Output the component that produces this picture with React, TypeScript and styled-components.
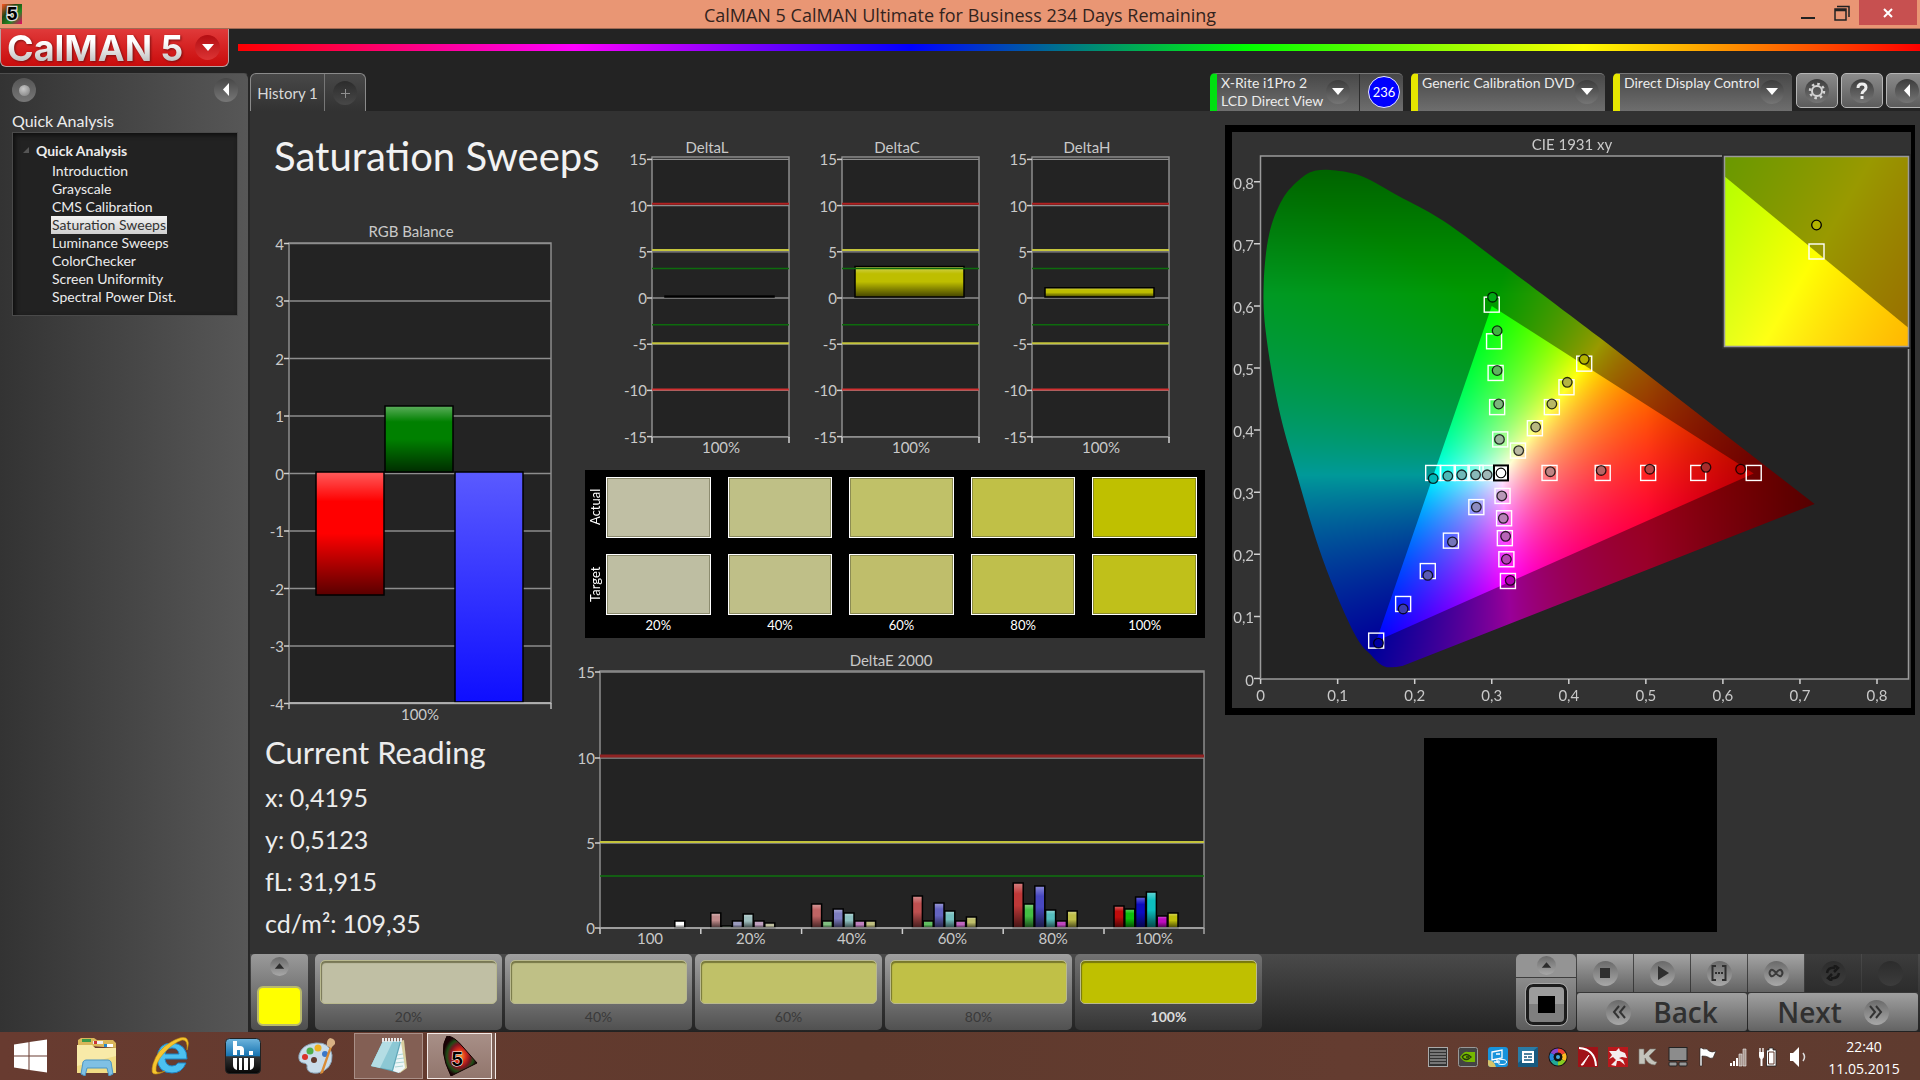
import React, { useEffect, useRef } from 'react';
import styled, { createGlobalStyle } from 'styled-components';

const UI = '"Lato", "Liberation Sans", sans-serif';
const SYSTEM = '"Open Sans", "Noto Sans", sans-serif';

const GlobalStyle = createGlobalStyle`
  *, *::before, *::after { box-sizing: border-box; }
  body { margin: 0; background: #232323; font-family: ${UI}; color: #ececec; }
  button { font: inherit; color: inherit; border: 0; padding: 0; background: none; cursor: pointer; }
  h1, h2, ul, dl, dd, dt, p { margin: 0; padding: 0; font-weight: 400; }
  ul { list-style: none; }
  svg, canvas { display: block; }
`;

/* ---------- window frame ---------- */

const Window = styled.div`
  display: flex;
  flex-direction: column;
  min-height: 100vh;
`;

const TitleBar = styled.header`
  display: grid;
  grid-template-columns: 140px 1fr 140px;
  height: 29px;
  background: #e99674;
  border-bottom: 1px solid #a06a54;
`;

const AppIcon = styled.div`
  padding: 4px 2px;
`;

const WindowTitle = styled.div`
  text-align: center;
  font-family: ${SYSTEM};
  font-size: 18px;
  line-height: 30px;
  color: #33231d;
`;

const WindowButtons = styled.div`
  display: flex;
  justify-content: flex-end;
  padding-right: 3px;
`;

const WindowButton = styled.button<{ $close?: boolean }>`
  display: flex;
  align-items: center;
  justify-content: center;
  width: ${(p) => (p.$close ? 58 : 34)}px;
  height: 25px;
  background: ${(p) => (p.$close ? '#c75050' : 'transparent')};
`;

const BrandRow = styled.div`
  display: flex;
  gap: 9px;
  height: 44px;
  background: #232323;
`;

const LogoButton = styled.button`
  display: flex;
  align-items: center;
  justify-content: space-between;
  width: 229px;
  height: 38px;
  padding: 0 8px 0 6px;
  border: 1px solid #b9a0a0;
  border-top: 0;
  border-radius: 0 0 6px 6px;
  background: linear-gradient(#e03a3a, #d62424 45%, #c90c0c);
`;

const LogoText = styled.span`
  display: flex;
  gap: 8px;
  font-family: "Inter", sans-serif;
  font-weight: 700;
  font-size: 36px;
  line-height: 30px;
  background: linear-gradient(#ffffff 30%, #bdbdbd);
  background-clip: text;
  color: transparent;
  filter: drop-shadow(1px 1px 1px #7a1010);
`;

const Rainbow = styled.div`
  flex: 1;
  height: 7px;
  margin-top: 15px;
  background: linear-gradient(90deg, #f00, #f0f 20%, #00f 40%, #0f0 60%, #ff0 80%, #f00);
`;

const Round = styled.span<{ $size: number; $bg: string }>`
  display: flex;
  align-items: center;
  justify-content: center;
  flex: none;
  width: ${(p) => p.$size}px;
  height: ${(p) => p.$size}px;
  border-radius: 50%;
  background: ${(p) => p.$bg};
`;

const Body = styled.div`
  display: flex;
  flex: 1;
`;

/* ---------- sidebar ---------- */

const Sidebar = styled.aside`
  display: flex;
  flex-direction: column;
  width: 250px;
  flex: none;
  padding: 4px 10px 0 12px;
  border-top: 1px solid #4d4d4d;
  border-right: 2px solid #262626;
  border-radius: 0 6px 0 0;
  background: linear-gradient(90deg, #333, #575757);
`;

const SidebarTools = styled.div`
  display: flex;
  justify-content: space-between;
`;

const SidebarTitle = styled.h2`
  margin: 8px 0 0;
  font-size: 16px;
  line-height: 22px;
`;

const Tree = styled.nav`
  height: 184px;
  padding: 8px 0 0 10px;
  border: 1px solid #4a4a4a;
  background: #222;
  box-shadow: inset 2px 2px 5px #0d0d0d;
  font-size: 14px;
`;

const TreeRoot = styled.div`
  display: flex;
  align-items: center;
  gap: 7px;
  height: 18px;
  font-size: 14px;
  font-weight: 700;
`;

const TreeList = styled.ul`
  display: flex;
  flex-direction: column;
  padding: 3px 0 0 28px;
`;

const TreeLink = styled.a<{ $on?: boolean }>`
  display: inline-block;
  padding: 0 1px;
  line-height: 18px;
  text-decoration: none;
  vertical-align: top;
  color: ${(p) => (p.$on ? '#333' : '#ececec')};
  background: ${(p) => (p.$on ? 'linear-gradient(#f2f2f2, #cfcfcf)' : 'none')};
`;

/* ---------- tabs and devices ---------- */

const Main = styled.main`
  display: flex;
  flex-direction: column;
  flex: 1;
  min-width: 0;
`;

const TopRow = styled.div`
  display: flex;
  justify-content: space-between;
  height: 38px;
  background: #232323;
`;

const Tabs = styled.div`
  display: flex;
  border: 1px solid #8a8a8a;
  border-bottom: 0;
  border-radius: 6px 6px 0 0;
  background: linear-gradient(#484848, #323232);
`;

const Tab = styled.button<{ $w: number }>`
  display: flex;
  align-items: center;
  justify-content: center;
  width: ${(p) => p.$w}px;
  padding-top: 1px;
  font-size: 15px;
  color: #d8d8d8;
  & + & { border-left: 1px solid #777; }
`;

const Devices = styled.div`
  display: flex;
  gap: 8px;
  overflow: hidden;
`;

const Device = styled.div<{ $strip: string; $w: number }>`
  display: flex;
  width: ${(p) => p.$w}px;
  border-top: 1px solid #777;
  border-left: 7px solid ${(p) => p.$strip};
  border-radius: 5px 5px 0 0;
  background: linear-gradient(#484848, #6e6e6e);
`;

const DeviceMenu = styled.button`
  display: flex;
  flex: 1;
  justify-content: space-between;
  padding: 0 9px 0 4px;
  text-align: left;
  font-size: 14px;
  line-height: 18px;
  white-space: nowrap;
  ${Round} { margin-top: 6px; }
`;

const Meter = styled.div`
  display: flex;
  align-items: center;
  justify-content: flex-end;
  width: 44px;
  padding: 0 3px 2px 0;
  border-left: 1px solid #2d2d2d;
`;

const MeterValue = styled.span`
  width: 32px;
  height: 32px;
  border: 1px solid #e8e8ff;
  border-radius: 50%;
  background: #0000fe;
  font-size: 13px;
  line-height: 30px;
  text-align: center;
  color: #fff;
`;

const ToolButtons = styled.div`
  display: flex;
  gap: 3px;
  margin: 0 -8px 0 -4px;
`;

const ToolButton = styled.button`
  display: flex;
  align-items: center;
  justify-content: center;
  width: 42px;
  height: 35px;
  border: 1px solid #b5b5b5;
  border-radius: 5px;
  background: linear-gradient(#8b8b8b, #5c5c5c);
`;

/* ---------- workspace ---------- */

const Workspace = styled.section`
  display: grid;
  grid-template-columns: minmax(0, 290fr) minmax(0, 630fr) minmax(0, 690fr);
  gap: 20px;
  flex: 1;
  padding: 0 5px 0 15px;
  background: #323232;
`;

const Column = styled.div`
  display: flex;
  flex-direction: column;
`;

const PageTitle = styled.h1`
  margin: 18px 0 35px 9px;
  font-size: 40px;
  line-height: 54px;
  white-space: nowrap;
  color: #f2f2f2;
`;

const Chart = styled.svg`
  width: 100%;
  height: auto;
  font-family: ${UI};
  font-size: 15px;
  fill: #c9c9c9;
`;

const Reading = styled.section`
  margin-top: 2px;
`;

const ReadingTitle = styled.h2`
  font-size: 31px;
  line-height: 44px;
`;

const ReadingList = styled.dl`
  margin-top: 2px;
  font-size: 25px;
  line-height: 42px;
  white-space: nowrap;
`;

const ReadingRow = styled.div`
  display: flex;
  gap: 6px;
`;

const DeltaRow = styled.div`
  display: grid;
  grid-template-columns: repeat(3, minmax(0, 1fr));
  gap: 24px;
  margin: 27px 35px 10px 49px;
`;

const SwatchPanel = styled.div`
  display: grid;
  grid-template-columns: 18px 1fr;
  height: 168px;
  margin: 0 0 12px 10px;
  padding: 7px 8px 0 3px;
  background: #000;
`;

const SwatchSides = styled.div`
  display: grid;
  grid-template-rows: 77px 60px;
  align-content: start;
`;

const SwatchSide = styled.span`
  width: 14px;
  height: 60px;
  writing-mode: vertical-rl;
  transform: rotate(180deg);
  text-align: center;
  font-size: 13px;
  line-height: 14px;
  color: #fff;
`;

const SwatchGrid = styled.div`
  display: grid;
  grid-template-columns: repeat(5, minmax(0, 1fr));
  grid-template-rows: 77px 61px 22px;
  column-gap: 17px;
`;

const Swatch = styled.div<{ $c: string }>`
  height: 61px;
  border: 1px solid #fff;
  background: ${(p) => p.$c};
  box-shadow: inset 0 0 0 1px rgba(90, 90, 60, 0.5);
`;

const SwatchLabel = styled.span`
  text-align: center;
  font-size: 13px;
  line-height: 20px;
  color: #fff;
`;

const CieFrame = styled.div`
  display: grid;
  margin-top: 14px;
  border: solid #000;
  border-width: 7px 4px 7px 7px;
`;

const CieCanvas = styled.canvas`
  grid-area: 1 / 1;
  width: 100%;
`;

const CieOverlay = styled(Chart)`
  grid-area: 1 / 1;
`;

const Preview = styled.div`
  align-self: center;
  width: 293px;
  height: 194px;
  margin-top: 23px;
  background: #000;
`;

/* ---------- bottom bar ---------- */

const BottomBar = styled.footer`
  display: flex;
  justify-content: space-between;
  height: 78px;
  padding: 0 2px 1px 1px;
  background: linear-gradient(#4a4a4a, #242424);
  border-bottom: 1px solid #222;
`;

const PatchGroup = styled.div`
  display: flex;
  gap: 3px;
`;

const CurrentPatch = styled.div`
  display: flex;
  flex-direction: column;
  align-items: center;
  justify-content: space-between;
  width: 57px;
  margin-right: 4px;
  padding: 3px 0 4px;
  border-radius: 4px;
  background: linear-gradient(#9a9a9a, #4e4e4e);
`;

const CurrentColour = styled.span`
  width: 45px;
  height: 40px;
  border: 2px solid #b9b96c;
  border-radius: 6px;
  background: #ff0;
`;

const Patch = styled.button<{ $on?: boolean }>`
  display: flex;
  flex-direction: column;
  width: 187px;
  padding: 6px 5px 0;
  border-radius: 5px;
  background: ${(p) => (p.$on ? 'linear-gradient(#727272, #353535)' : 'linear-gradient(#a0a0a0, #515151)')};
  font-size: 14px;
  font-weight: ${(p) => (p.$on ? 700 : 400)};
  color: ${(p) => (p.$on ? '#dcdcdc' : '#3a3a3a')};
`;

const PatchColour = styled.span<{ $c: string }>`
  align-self: stretch;
  height: 47px;
  border: 1px solid #b9b98f;
  border-radius: 5px;
  background: ${(p) => p.$c};
  box-shadow: inset 1px 2px 1px rgba(60, 60, 20, 0.55);
`;

const PatchLabel = styled.span`
  align-self: center;
  line-height: 26px;
`;

const Transport = styled.div`
  display: flex;
  gap: 1px;
`;

const StopPanel = styled.div`
  display: flex;
  flex-direction: column;
  gap: 1px;
  width: 60px;
`;

const StopHead = styled.button`
  display: flex;
  align-items: center;
  justify-content: center;
  height: 23px;
  border-radius: 5px 5px 0 0;
  background: #949494;
`;

const StopBody = styled.button`
  display: flex;
  align-items: center;
  justify-content: center;
  flex: 1;
  border-radius: 0 0 5px 5px;
  background: linear-gradient(#8c8c8c, #5c5c5c);
`;

const StopFrame = styled.span`
  display: flex;
  align-items: center;
  justify-content: center;
  width: 41px;
  height: 41px;
  border: 3px solid #1c1c1c;
  border-radius: 7px;
  outline: 1px solid #a5a5a5;
  background: linear-gradient(#9c9c9c 49%, #7f7f7f 50%);
  &::after { content: ''; width: 17px; height: 17px; background: #000; }
`;

const TransportGrid = styled.div`
  display: grid;
  grid-template-columns: repeat(6, 56px);
  grid-template-rows: 38px 38px;
  gap: 1px;
`;

const TransportButton = styled.button<{ $off?: boolean }>`
  display: flex;
  align-items: center;
  justify-content: center;
  background: ${(p) => (p.$off ? 'linear-gradient(#3c3c3c, #2c2c2c)' : 'linear-gradient(#a4a4a4, #636363)')};
`;

const NavButton = styled.button`
  grid-column: span 3;
  display: flex;
  align-items: center;
  justify-content: center;
  gap: 22px;
  border-radius: 3px;
  background: linear-gradient(#a0a0a0, #636363);
  font-family: ${SYSTEM};
  font-weight: 600;
  font-size: 28px;
  line-height: 36px;
  color: #303030;
`;

/* ---------- taskbar ---------- */

const TaskBar = styled.div`
  display: flex;
  justify-content: space-between;
  height: 48px;
  background: linear-gradient(90deg, #683b30, #5f3a2d 45%, #643c30 70%, #5f3b2f);
`;

const TaskGroup = styled.div`
  display: flex;
  align-items: center;
`;

const TaskButton = styled.button<{ $w: number; $state?: 'open' | 'active' }>`
  display: flex;
  align-items: center;
  justify-content: center;
  width: ${(p) => p.$w}px;
  height: 46px;
  margin-right: ${(p) => (p.$state ? 4 : 0)}px;
  border: ${(p) => (p.$state ? `1px solid ${p.$state === 'active' ? '#f3e9e6' : '#a98f87'}` : '0')};
  background: ${(p) =>
    p.$state === 'active' ? 'linear-gradient(#a88f87, #92766d)' : p.$state === 'open' ? '#835f54' : 'none'};
  box-shadow: ${(p) => (p.$state === 'active' ? '3px 0 0 #7d6056, 4px 0 0 #f3e9e6' : 'none')};
`;

const Tray = styled.div`
  display: flex;
  align-items: center;
  gap: 10px;
  padding-top: 2px;
`;

const Clock = styled.time`
  display: flex;
  flex-direction: column;
  width: 112px;
  padding-top: 3px;
  text-align: center;
  font-family: ${SYSTEM};
  font-size: 14px;
  line-height: 22px;
  color: #fff;
`;

/* ---------- small drawings ---------- */

type Dir = 'down' | 'up' | 'left';
const ARROWS: Record<Dir, string> = { down: 'M1 3h12l-6 7z', up: 'M1 10h12l-6-7z', left: 'M10 0v13L4 6.500z' };
const Arrow = ({ dir, fill = '#fff', size = 14 }: { dir: Dir; fill?: string; size?: number }) => (
  <svg width={size} height={size} viewBox="0 0 14 14" aria-hidden="true">
    <path d={ARROWS[dir]} fill={fill} />
  </svg>
);

const Five = () => (
  <svg width="20" height="20" viewBox="0 0 20 20" aria-hidden="true">
    <defs>
      <linearGradient id="five" x2="1" y2="1">
        <stop offset="0" stopColor="#f52" />
        <stop offset=".35" stopColor="#241" />
        <stop offset=".65" stopColor="#282" />
        <stop offset="1" stopColor="#e06" />
      </linearGradient>
    </defs>
    <rect width="20" height="20" fill="url(#five)" />
    <text x="10" y="16" textAnchor="middle" fontFamily="Inter, sans-serif" fontWeight="800" fontSize="17" fill="#000" stroke="#ddd" strokeWidth="2.500" paintOrder="stroke">5</text>
  </svg>
);

/* ---------- charts ---------- */

const GRID = '#8d8d8d';

const ShineDefs = ({ id }: { id: string }) => (
  <defs>
    <linearGradient id={id} x2="0" y2="1">
      <stop offset="0" stopColor="#fff" stopOpacity=".36" />
      <stop offset=".24" stopColor="#fff" stopOpacity="0" />
      <stop offset=".5" stopColor="#000" stopOpacity="0" />
      <stop offset="1" stopColor="#000" stopOpacity=".65" />
    </linearGradient>
  </defs>
);

interface BarProps { x: number; y: number; w: number; h: number; fill: string; shine?: string }
const Bar = ({ x, y, w, h, fill, shine }: BarProps) => (
  <g>
    <rect x={x} y={y} width={w} height={h} fill={fill} />
    {shine && <rect x={x} y={y} width={w} height={h} fill={`url(#${shine})`} />}
    <rect x={x} y={y} width={w} height={h} fill="none" stroke="#000" strokeWidth="1.5" />
  </g>
);

interface FrameProps { x: number; y: number; w: number; h: number; ticks: [string, number][]; grid?: boolean }
const PlotFrame = ({ x, y, w, h, ticks, grid }: FrameProps) => (
  <g>
    <rect x={x} y={y} width={w} height={h} fill="#232323" stroke={GRID} strokeWidth="1.5" />
    {ticks.map(([label, ty]) => (
      <g key={label}>
        {grid && <line x1={x} x2={x + w} y1={ty} y2={ty} stroke={GRID} strokeWidth="1.3" />}
        <line x1={x - 5} x2={x} y1={ty} y2={ty} stroke="#cfcfcf" strokeWidth="1.5" />
        <text x={x - 5} y={ty + 6} textAnchor="end">{label}</text>
      </g>
    ))}
  </g>
);

const RgbBalance = () => {
  const ticks = [4, 3, 2, 1, 0, -1, -2, -3, -4].map((v) => [String(v), 255.5 - v * 57.5] as [string, number]);
  return (
    <Chart viewBox="0 0 290 510" role="img" aria-label="RGB Balance">
      <ShineDefs id="rgbShine" />
      <defs>
        <linearGradient id="rgbBlue" x2="0" y2="1">
          <stop offset="0" stopColor="#5a5aff" />
          <stop offset="1" stopColor="#0e0eff" />
        </linearGradient>
      </defs>
      <text x="146" y="19" textAnchor="middle">RGB Balance</text>
      <PlotFrame x={24} y={25} w={262} h={460} ticks={ticks} grid />
      <Bar x={51} y={254} w={68} h={123} fill="#f00" shine="rgbShine" />
      <Bar x={120} y={188} w={68} h={66} fill="#008000" shine="rgbShine" />
      <Bar x={190} y={254} w={68} h={230} fill="url(#rgbBlue)" />
      <path d="M24 485h262M24 485v6M286 485v6" stroke="#bbb" strokeWidth="1.5" />
      <text x="155" y="502" textAnchor="middle">100%</text>
    </Chart>
  );
};

const DeltaChart = ({ name, value }: { name: string; value: number }) => {
  const y = (v: number) => 160 - v * 9.24;
  const ticks = [15, 10, 5, 0, -5, -10, -15].map((v) => [String(v), y(v)] as [string, number]);
  const limits: [number, string, number][] = [
    [10.2, '#b02020', 2], [5.2, '#c4c43c', 2], [3.2, '#0d6b0d', 1.5],
    [-2.9, '#0d6b0d', 1.5], [-4.9, '#c4c43c', 2], [-9.9, '#d03030', 2],
  ];
  const id = `shine${name}`;
  return (
    <Chart viewBox="0 0 166 322" role="img" aria-label={name}>
      <ShineDefs id={id} />
      <text x="83" y="15" textAnchor="middle">{name}</text>
      <PlotFrame x={28} y={19} w={137} h={280} ticks={ticks} grid />
      <Bar x={41} y={y(value) - 1} w={109} h={y(0) - y(value)} fill="#bebe00" shine={id} />
      {limits.map(([v, c, w]) => (
        <line key={v} x1="28" x2="165" y1={y(v)} y2={y(v)} stroke={c} strokeWidth={w} />
      ))}
      <path d="M28 299v6M165 299v6" stroke="#cfcfcf" strokeWidth="1.5" />
      <text x="97" y="315" textAnchor="middle">100%</text>
    </Chart>
  );
};

const SERIES: { label: string; bars: [number, string][] }[] = [
  { label: '100', bars: [[0, ''], [0, ''], [0, ''], [0, ''], [0, ''], [0, ''], [7, '#ffffff']] },
  { label: '20%', bars: [[15, '#be8a8a'], [2, '#9fbe9f'], [7, '#9a9abe'], [14, '#9fbebe'], [7, '#be9fbe'], [5, '#bebe9f']] },
  { label: '40%', bars: [[24, '#c06464'], [7, '#7fbe7f'], [19, '#7d7dc0'], [15, '#8ec0c0'], [7, '#be7fbe'], [7, '#bebe7f']] },
  { label: '60%', bars: [[32, '#be5050'], [7, '#5fbe5f'], [25, '#6464c0'], [17, '#74bebe'], [7, '#be64be'], [11, '#bebe6a']] },
  { label: '80%', bars: [[45, '#be3838'], [24, '#44be44'], [42, '#4848c0'], [18, '#54bebe'], [7, '#be44be'], [17, '#bebe48']] },
  { label: '100%', bars: [[22, '#be0c0c'], [19, '#0cbe0c'], [31, '#0c0cc0'], [36, '#0cbebe'], [12, '#be0cbe'], [15, '#bebe0c']] },
];

const DeltaE = () => (
  <Chart viewBox="0 0 630 300" role="img" aria-label="DeltaE 2000">
    <ShineDefs id="deShine" />
    <text x="316" y="16" textAnchor="middle">DeltaE 2000</text>
    <PlotFrame x={25} y={21} w={604} h={257} ticks={[['15', 22], ['10', 108], ['5', 193], ['0', 278]]} grid />
    <line x1="25" x2="629" y1="106" y2="106" stroke="#8f2222" strokeWidth="3" />
    <line x1="25" x2="629" y1="192" y2="192" stroke="#c4c43c" strokeWidth="2" />
    <line x1="25" x2="629" y1="226" y2="226" stroke="#0f730f" strokeWidth="1.5" />
    {SERIES.map(({ label, bars }, g) => {
      const left = 25 + g * 100.8;
      return (
        <g key={label}>
          {bars.map(([h, c], i) => h > 0 && (
            <Bar key={i} x={left + 10 + i * 10.8} y={278 - h} w={10} h={h} fill={c} shine="deShine" />
          ))}
          <line x1={left} x2={left} y1="278" y2="284" stroke="#cfcfcf" strokeWidth="1.5" />
          <text x={left + 50} y="294" textAnchor="middle">{label}</text>
        </g>
      );
    })}
    <path d="M25 278h604M629 278v6" stroke="#a5a5a5" strokeWidth="1.5" />
  </Chart>
);

/* ---------- chromaticity diagram ---------- */

type XY = [number, number];
const CIE_W = 679;
const CIE_H = 576;
const px = (x: number) => 28.6 + 770.5 * x;
const py = (y: number) => 546.5 - 621 * y;

const LOCUS: XY[] = [
  [0.719, 0.281], [0.44, 0.549], [0.318, 0.663], [0.237, 0.737], [0.179, 0.777], [0.133, 0.808], [0.098, 0.818],
  [0.072, 0.818], [0.052, 0.805], [0.028, 0.771], [0.011, 0.715], [0.004, 0.635], [0.007, 0.555], [0.023, 0.438],
  [0.046, 0.333], [0.081, 0.191], [0.121, 0.074], [0.144, 0.037], [0.158, 0.021], [0.17, 0.018], [0.184, 0.02],
];
const GAMUT: XY[] = [[0.64, 0.33], [0.3, 0.6], [0.15, 0.06]];

interface Plane {
  left: number;
  top: number;
  w: number;
  h: number;
  x: (v: number) => number;
  y: (v: number) => number;
  ix: (p: number) => number;
  iy: (p: number) => number;
}
const MAIN_PLANE: Plane = {
  left: 29, top: 24, w: 647, h: 523, x: px, y: py,
  ix: (p) => (p - 28.6) / 770.5, iy: (p) => (546.5 - p) / 621,
};
const INSET_PLANE: Plane = {
  left: 493, top: 25, w: 183, h: 189,
  x: (v) => 584.5 + (v - 0.4193) * 3660, y: (v) => 120 - (v - 0.5053) * 3800,
  ix: (p) => 0.4193 + (p - 584.5) / 3660, iy: (p) => 0.5053 - (p - 120) / 3800,
};

const shade = (x: number, y: number): number[] => {
  const z = 1 - x - y;
  const rgb = [
    3.2406 * x - 1.5372 * y - 0.4986 * z,
    -0.9689 * x + 1.8758 * y + 0.0415 * z,
    0.0557 * x - 0.204 * y + 1.057 * z,
  ].map((v) => Math.max(0, v));
  const max = Math.max(...rgb, 1e-6);
  const fadeRed = 1 - Math.min(1, Math.max(0, (x - 0.5) / 0.22)) * 0.45;
  const fadeGreen = 1 - Math.min(1, Math.max(0, (y - 0.62) / 0.2)) * 0.35;
  return rgb.map((v) => (255 * v / max) * fadeRed * fadeGreen);
};

const layer = (plane: Plane, gain: number) => {
  const c = document.createElement('canvas');
  c.width = plane.w;
  c.height = plane.h;
  const ctx = c.getContext('2d')!;
  const img = ctx.createImageData(plane.w, plane.h);
  for (let j = 0; j < plane.h; j++) {
    for (let i = 0; i < plane.w; i++) {
      const [r, g, b] = shade(plane.ix(plane.left + i), plane.iy(plane.top + j));
      const o = (j * plane.w + i) * 4;
      img.data[o] = r * gain;
      img.data[o + 1] = g * gain;
      img.data[o + 2] = b * gain;
      img.data[o + 3] = 255;
    }
  }
  ctx.putImageData(img, 0, 0);
  return c;
};

const tracePolygon = (ctx: CanvasRenderingContext2D, pts: XY[]) => {
  ctx.beginPath();
  pts.forEach(([x, y], i) => (i ? ctx.lineTo(x, y) : ctx.moveTo(x, y)));
  ctx.closePath();
};

const traceLocus = (ctx: CanvasRenderingContext2D) => {
  const p = LOCUS.map(([x, y]) => [px(x), py(y)] as XY);
  ctx.beginPath();
  ctx.moveTo(...p[0]);
  ctx.lineTo(...p[1]);
  for (let i = 1; i < p.length - 1; i++) {
    const a = i === 1 ? p[1] : p[i - 1];
    const b = p[i];
    const c = p[i + 1];
    const d = i + 2 < p.length ? p[i + 2] : p[i + 1];
    ctx.bezierCurveTo(b[0] + (c[0] - a[0]) / 6, b[1] + (c[1] - a[1]) / 6, c[0] - (d[0] - b[0]) / 6, c[1] - (d[1] - b[1]) / 6, c[0], c[1]);
  }
  ctx.closePath();
};

const drawDiagram = (ctx: CanvasRenderingContext2D) => {
  ctx.clearRect(0, 0, CIE_W, CIE_H);
  ctx.fillStyle = '#232323';
  ctx.fillRect(28, 24, 648, 523);
  const paint = (plane: Plane, gain: number) => ctx.drawImage(layer(plane, gain), plane.left, plane.top);
  ctx.save();
  traceLocus(ctx);
  ctx.clip();
  paint(MAIN_PLANE, 0.6);
  tracePolygon(ctx, GAMUT.map(([x, y]) => [px(x), py(y)]));
  ctx.clip();
  paint(MAIN_PLANE, 1);
  ctx.restore();
  ctx.fillStyle = '#2b2b2b';
  ctx.fillRect(490, 22, 189, 195);
  paint(INSET_PLANE, 0.6);
  ctx.save();
  ctx.beginPath();
  ctx.rect(INSET_PLANE.left, INSET_PLANE.top, INSET_PLANE.w, INSET_PLANE.h);
  ctx.clip();
  tracePolygon(ctx, GAMUT.map(([x, y]) => [INSET_PLANE.x(x), INSET_PLANE.y(y)]));
  ctx.clip();
  paint(INSET_PLANE, 1);
  ctx.restore();
};

const TARGETS: XY[] = [
  [0.3, 0.602], [0.303, 0.543], [0.305, 0.492], [0.307, 0.437], [0.311, 0.385],
  [0.42, 0.507], [0.397, 0.469], [0.378, 0.437], [0.356, 0.403], [0.334, 0.367],
  [0.375, 0.331], [0.444, 0.331], [0.503, 0.331], [0.568, 0.331], [0.64, 0.331],
  [0.314, 0.294], [0.316, 0.258], [0.317, 0.226], [0.319, 0.192], [0.321, 0.157],
  [0.28, 0.276], [0.247, 0.222], [0.217, 0.173], [0.185, 0.12], [0.15, 0.061],
  [0.224, 0.331], [0.243, 0.331], [0.261, 0.331], [0.279, 0.331], [0.294, 0.331],
];

const READINGS: [number, number, string][] = [
  [0.301, 0.614, '#00a814'], [0.307, 0.56, '#3fb43f'], [0.307, 0.496, '#5fb45f'], [0.309, 0.442, '#7cb47c'], [0.31, 0.385, '#9bb49b'],
  [0.42, 0.514, '#b4b400'], [0.398, 0.477, '#b4b440'], [0.378, 0.442, '#b8b864'], [0.357, 0.405, '#b8b880'], [0.335, 0.367, '#b8b8a0'],
  [0.376, 0.333, '#c08484'], [0.442, 0.335, '#b86464'], [0.505, 0.337, '#b84444'], [0.578, 0.34, '#a82c2c'], [0.623, 0.337, '#b40000'],
  [0.313, 0.294, '#b898b8'], [0.315, 0.258, '#b880b8'], [0.318, 0.229, '#b864b8'], [0.319, 0.192, '#b444b4'], [0.324, 0.158, '#b400b4'],
  [0.28, 0.276, '#8c8cc0'], [0.249, 0.22, '#7474b8'], [0.217, 0.166, '#5c5cb4'], [0.185, 0.112, '#3c3cb0'], [0.153, 0.057, '#0000a0'],
  [0.224, 0.322, '#00b8b8'], [0.243, 0.326, '#4cb8b8'], [0.261, 0.328, '#70b8b8'], [0.279, 0.328, '#88b8b8'], [0.294, 0.328, '#a0b8b8'],
];

const CieDiagram = () => {
  const ref = useRef<HTMLCanvasElement>(null);
  useEffect(() => {
    const ctx = ref.current?.getContext('2d');
    if (ctx) drawDiagram(ctx);
  }, []);
  const steps = [0, 1, 2, 3, 4, 5, 6, 7, 8];
  const label = (n: number) => (n ? `0,${n}` : '0');
  return (
    <CieFrame>
      <CieCanvas ref={ref} width={CIE_W} height={CIE_H} />
      <CieOverlay viewBox={`0 0 ${CIE_W} ${CIE_H}`} role="img" aria-label="CIE 1931 xy">
        <text x="340" y="18" textAnchor="middle">CIE 1931 xy</text>
        <path d="M490 24H28.500V547H676.500V217" fill="none" stroke="#9a9a9a" strokeWidth="1.5" />
        {steps.map((n) => (
          <g key={n}>
            <path d={`M${px(n / 10)} 547v5M28 ${py(n / 10)}h-6`} stroke="#cfcfcf" strokeWidth="1.5" />
            <text x={px(n / 10)} y="569" textAnchor="middle">{label(n)}</text>
            <text x="22" y={py(n / 10) + 7} textAnchor="end">{label(n)}</text>
          </g>
        ))}
        {TARGETS.map(([x, y], i) => (
          <rect key={i} x={px(x) - 7.5} y={py(y) - 7.5} width="15" height="15" fill="none" stroke="#fff" strokeWidth="1.4" />
        ))}
        {READINGS.map(([x, y, c], i) => (
          <circle key={i} cx={px(x)} cy={py(y)} r="4.800" fill={c} stroke="#000" strokeOpacity=".8" strokeWidth="1.3" />
        ))}
        <rect x={px(0.312) - 7} y={py(0.331) - 7.5} width="14" height="15" fill="#fff" stroke="#000" strokeWidth="2" />
        <circle cx={px(0.312)} cy={py(0.331)} r="4.800" fill="#fff" stroke="#000" strokeWidth="1.2" />
        <rect x="492.500" y="24.500" width="184" height="190" fill="none" stroke="#9a9a9a" strokeWidth="1.5" />
        <circle cx="584.500" cy="93" r="4.800" fill="#b4b400" stroke="#000" strokeWidth="1.3" />
        <rect x="577" y="112" width="15" height="15" fill="none" stroke="#fff" strokeWidth="1.4" />
      </CieOverlay>
    </CieFrame>
  );
};

/* ---------- taskbar icons ---------- */

const StartIcon = () => (
  <svg width="33" height="34" viewBox="0 0 33 34"><path fill="#fff" d="M0 5.500l14.500-2.200V16.500H0zM15.500 3.100L33 .5v16H15.500zM0 17.500h14.500v13.200L0 28.500zM15.500 17.500H33v16l-17.500-2.600z" /></svg>
);
const ExplorerIcon = () => (
  <svg width="40" height="40" viewBox="0 0 40 40">
    <path d="M1 9V4l3-2h13l3 2h16l3 3v5z" fill="#d9b65a" />
    <path d="M5 3h9v3H5z" fill="#3a9a4a" /><path d="M16 5h10v3H16z" fill="#eee" /><path d="M17 5h3v3h-3z" fill="#c33" /><path d="M27 8h9v3h-9z" fill="#fff" /><path d="M27 8h3v3h-3z" fill="#28c" />
    <path d="M0 9h15l3 3h21v25H0z" fill="#f1dc85" /><path d="M0 9h15l3 3h21v8L0 30z" fill="#f8eaa8" />
    <path d="M4 38l2-12q1-2 3-2h22q2 0 3 2l2 12-4 2-2-8H10l-2 8z" fill="#7fc0e4" stroke="#4a95c4" />
  </svg>
);
const IeIcon = () => (
  <svg width="40" height="40" viewBox="0 0 40 40">
    <path d="M37 23H15q1 7 7 7 4 0 6-3h8q-4 10-14 10Q8 37 7 22 8 7 22 7q15 1 15 16zM15 18h14q-1-6-7-6t-7 6z" fill="#4cc0f0" stroke="#1d84c6" />
    <path d="M37 14q3-9-1-12-5-2-15 4Q7 14 3 28q-3 11 3 10 4 0 9-3-7 3-9 0-1-8 8-18Q23 7 32 4q6-1 5 10z" fill="#f6c52f" stroke="#c8930c" strokeWidth=".6" />
  </svg>
);
const HiIcon = () => (
  <svg width="36" height="36" viewBox="0 0 36 36">
    <defs><linearGradient id="hi" x2="0" y2="1"><stop stopColor="#6fb5dd" /><stop offset=".5" stopColor="#1673b1" /><stop offset=".52" stopColor="#333" /><stop offset="1" stopColor="#050505" /></linearGradient></defs>
    <rect x=".5" y=".5" width="35" height="35" rx="4" fill="url(#hi)" stroke="#222" />
    <path d="M8 3h4v5h3q4 0 4 4v5h-4v-5h-3v5H8zM24 13h4v4h-4zM8 20h4v12q-4-1-4-5zM14 20h3v12h-3zM19 20h4v12h-4zM25 20h4v7q0 4-4 5z" fill="#fff" />
  </svg>
);
const PaintIcon = () => (
  <svg width="38" height="38" viewBox="0 0 38 38">
    <path d="M18 6q14-1 16 12 1 14-14 18-10 1-11-5 1-5-4-5-5-1-4-8Q4 7 18 6z" fill="#c9dcea" stroke="#8aa6ba" />
    <circle cx="12" cy="14" r="3.500" fill="#4fae4a" /><circle cx="20" cy="11" r="3.500" fill="#f0b020" /><circle cx="7" cy="20" r="3" fill="#d8322a" /><circle cx="27" cy="17" r="3" fill="#3c78c8" /><circle cx="16" cy="23" r="3" fill="#623a2e" />
    <path d="M32 9l2 1-9 26-3 1z" fill="#d98b35" /><path d="M29 9q-1-6 3-8 6 1 5 6l-4 4z" fill="#d8b184" />
  </svg>
);
const NotepadIcon = () => (
  <svg width="40" height="38" viewBox="0 0 40 38">
    <path d="M31 4l4-1 3 28-7 5z" fill="#d8cfa0" />
    <path d="M14 4h18l-2 32L2 29z" fill="#5fa6b8" />
    <path d="M14 4h17l-8 29L2 29z" fill="#8cc8d4" />
    <path d="M14 4h10L11 31l-9-2z" fill="#b4dde4" />
    <path d="M32 5l4 26-6 5-6-2z" fill="#eef6f8" />
    <path d="M28 18l6-1M27 22l8-1M26 26l9-1M26 30l8-1" stroke="#9cc" strokeWidth=".8" />
    <path d="M13 3h20" stroke="#e8e8e8" strokeWidth="4" strokeDasharray="2 1" />
  </svg>
);
const CalmanIcon = () => (
  <svg width="36" height="40" viewBox="0 0 36 40">
    <defs><radialGradient id="cm"><stop stopColor="#ff9a30" /><stop offset=".35" stopColor="#d42a1a" /><stop offset=".6" stopColor="#7a1420" /><stop offset=".8" stopColor="#1e4c16" /><stop offset="1" stopColor="#1a0306" /></radialGradient></defs>
    <path d="M5 0q7 0 16 11l14 16L9 40Q-4 14 5 0z" fill="url(#cm)" stroke="#120000" />
    <text x="15" y="30" textAnchor="middle" fontFamily="Inter, sans-serif" fontWeight="700" fontSize="19" fill="#000" stroke="#fff" strokeWidth="1" paintOrder="stroke">5</text>
  </svg>
);

const TRAY: [string, React.ReactNode][] = [
  ['Memory', <><rect x=".5" y=".5" width="19" height="19" fill="#333" stroke="#aaa" /><path d="M2 4h16M2 7h16M2 10h16M2 13h16M2 16h16" stroke="#bbb" /></>],
  ['Graphics', <><rect x=".5" y=".5" width="19" height="19" rx="2" fill="#444" stroke="#999" /><path d="M2 10q4-6 8-5h7v10h-7q-5 0-8-5z" fill="#76b900" /><path d="M4 10q4-5 9 0-5 5-9 0M8 10h3" fill="none" stroke="#26380a" strokeWidth="1.300" /></>],
  ['Intel', <><rect width="20" height="20" rx="3" fill="#1793dc" /><path d="M0 13q6 0 8 7H3q-3 0-3-3z" fill="#d7c46a" /><path d="M4 5l10-2v8l-10 2zM9 12v3M6 15h6M8 7h4" fill="none" stroke="#fff" strokeWidth="1.300" /><ellipse cx="14" cy="15" rx="4.500" ry="2.500" fill="none" stroke="#fff" /></>],
  ['Notes', <><rect width="20" height="20" fill="#175a80" /><path d="M0 0h20L0 16z" fill="#2a7ba5" /><rect x="4" y="4" width="12" height="12" fill="#fff" /><path d="M6 7h8M6 10h3M10 10h4M6 13h8" stroke="#175a80" strokeWidth="1.500" /></>],
  ['Colour', <><circle cx="10" cy="10" r="9.500" fill="#111" /><g fill="none" strokeWidth="4"><path d="M10 3.500a6.500 6.500 0 0 1 5.600 3.200" stroke="#e43" /><path d="M15.600 6.700a6.500 6.500 0 0 1 0 6.600" stroke="#fb2" /><path d="M15.600 13.300A6.500 6.500 0 0 1 10 16.500" stroke="#8c2" /><path d="M10 16.500a6.500 6.500 0 0 1-5.600-3.200" stroke="#2a9" /><path d="M4.400 13.300a6.500 6.500 0 0 1 0-6.600" stroke="#28d" /><path d="M4.400 6.700A6.500 6.500 0 0 1 10 3.500" stroke="#84c" /></g><circle cx="10" cy="10" r="4" fill="#111" /><circle cx="10" cy="10" r="2" fill="#4ad" /></>],
  ['Gauge', <><rect width="20" height="20" fill="#a01217" /><path d="M1 1q16 1 17 18" fill="none" stroke="#fff" strokeWidth="2" /><path d="M3 18L11 8l-6 10z" fill="#fff" stroke="#fff" strokeWidth=".8" /></>],
  ['Dragon', <><rect width="20" height="20" fill="#b9181c" /><path d="M1 4l7 0 3-3 1 3 5 2 2 5-5-1-3 1 4 2 2 5-5-4-3 0-1 5-5-1 5-5-3-3-4 2 3-4z" fill="#f4eeee" /></>],
  ['Kaspersky', <path d="M1 2h5v6l6-6h6l-7 7q4 6 8 6l-2 3q-7 0-10-7v6H1z" fill="#c4c4bc" stroke="#77736c" strokeWidth=".6" />],
  ['Touchpad', <><rect x="1" y=".5" width="18" height="13" fill="#8c8c8c" stroke="#222" /><rect x="1" y="15" width="8" height="4" rx="1" fill="#999" stroke="#222" /><rect x="11" y="15" width="8" height="4" rx="1" fill="#999" stroke="#222" /></>],
  ['Action centre', <path d="M2 1h2l1 1q4-1 6 2 3 2 7 0l-3 7q-3 1-5-1-2-1-6-1v10H2z" fill="#fff" stroke="#222" strokeWidth=".6" />],
  ['Network', <><path d="M2 16h2v3H2zM5 14h2v5H5zM8 11h2v8H8z" fill="#fff" /><path d="M11 7h3v12h-3zM15 2h3v17h-3z" fill="#a9988f" stroke="#eee" strokeWidth=".6" /></>],
  ['Battery', <><path d="M2 1v4M5 1v4" stroke="#fff" strokeWidth="1.300" /><path d="M1 5h5v4q0 2-1.500 3v7h-2v-7Q1 11 1 9z" fill="#fff" /><path d="M11 1h4v2h3v16H8.500V3H11z" fill="#fff" stroke="#222" strokeWidth=".8" /><path d="M10.500 5h5.500v12h-5.500z" fill="#fff" stroke="#5f3b2f" /></>],
  ['Volume', <><path d="M2 6h3l6-6v20l-6-6H2z" fill="#fff" /><path d="M15 6q3 4 0 8" fill="none" stroke="#ddd" strokeWidth="1.500" /></>],
];

/* ---------- page ---------- */

const PAGES = ['Introduction', 'Grayscale', 'CMS Calibration', 'Saturation Sweeps', 'Luminance Sweeps', 'ColorChecker', 'Screen Uniformity', 'Spectral Power Dist.'];
const LEVELS = ['20%', '40%', '60%', '80%', '100%'];
const ACTUAL = ['#c0bfa4', '#bfc086', '#c0c168', '#c0c047', '#bfc000'];
const TARGET = ['#bebea2', '#bfbf88', '#bfbe6b', '#bfbf4c', '#c0c01a'];
const READING: [string, string][] = [['x:', '0,4195'], ['y:', '0,5123'], ['fL:', '31,915'], ['cd/m²:', '109,35']];
const DISC = 'linear-gradient(#3c3c3c, #757575)';
const DISC_LIGHT = 'linear-gradient(#6a6a6a, #a8a8a8)';

const TRANSPORT: [string, React.ReactNode, boolean?][] = [
  ['Stop', <path d="M3 3h10v10H3z" fill="#2f2f2f" />],
  ['Play', <path d="M4 1l11 7-11 7z" fill="#2f2f2f" />],
  ['Read series', <path d="M5 1H1.500v14H5M11 1h3.500v14H11M4 8h2M7 8h2M10 8h2" fill="none" stroke="#2f2f2f" strokeWidth="2" />],
  ['Continuous', <path d="M8 8q-3-4-5-3-3 3 0 6 2 1 5-3 3-4 5-3 3 3 0 6-2 1-5-3z" fill="none" stroke="#3a3a3a" strokeWidth="2" />],
  ['Refresh', <path d="M2 8q1-6 8-5M14 8q-1 6-8 5M9 0l4 3-4 4M7 9l-4 4 4 3" fill="none" stroke="#191919" strokeWidth="2.500" />, true],
  ['Record', null, true],
];

const App = () => (
  <Window>
    <GlobalStyle />
    <TitleBar>
      <AppIcon><Five /></AppIcon>
      <WindowTitle>CalMAN 5 CalMAN Ultimate for Business 234 Days Remaining</WindowTitle>
      <WindowButtons>
        <WindowButton aria-label="Minimize"><svg width="14" height="14" viewBox="0 0 14 14"><path d="M0 11h14v2H0z" fill="#222" /></svg></WindowButton>
        <WindowButton aria-label="Restore"><svg width="16" height="16" viewBox="0 0 16 16"><path d="M1 4h11v11H1zM1 5.500h11M3 1.500h12V12" fill="none" stroke="#222" strokeWidth="1.500" /></svg></WindowButton>
        <WindowButton $close aria-label="Close"><svg width="10" height="10" viewBox="0 0 10 10"><path d="M1 1l8 8M9 1l-8 8" stroke="#fff" strokeWidth="2" /></svg></WindowButton>
      </WindowButtons>
    </TitleBar>

    <BrandRow>
      <LogoButton aria-haspopup="menu">
        <LogoText><span>CalMAN</span><span>5</span></LogoText>
        <Round $size={25} $bg="linear-gradient(#b30d12, #dc3434)"><Arrow dir="down" /></Round>
      </LogoButton>
      <Rainbow />
    </BrandRow>

    <Body>
      <Sidebar>
        <SidebarTools>
          <Round as="button" $size={24} $bg="linear-gradient(#555, #777)" aria-label="Pin panel">
            <Round $size={11} $bg="radial-gradient(circle at 40% 35%, #c8c8c8, #7a7a7a)" />
          </Round>
          <Round as="button" $size={24} $bg="linear-gradient(#474747, #777)" aria-label="Collapse panel"><Arrow dir="left" /></Round>
        </SidebarTools>
        <SidebarTitle>Quick Analysis</SidebarTitle>
        <Tree aria-label="Quick Analysis">
          <TreeRoot>
            <svg width="6" height="6" viewBox="0 0 6 6" aria-hidden="true"><path d="M6 0v6H0z" fill="#555" /></svg>
            Quick Analysis
          </TreeRoot>
          <TreeList>
            {PAGES.map((p) => (
              <li key={p}><TreeLink href="#" $on={p === 'Saturation Sweeps'}>{p}</TreeLink></li>
            ))}
          </TreeList>
        </Tree>
      </Sidebar>

      <Main>
        <TopRow>
          <Tabs>
            <Tab $w={73}>History 1</Tab>
            <Tab $w={41} aria-label="Add history">
              <Round $size={24} $bg="linear-gradient(#2c2c2c, #484848)">
                <svg width="9" height="9" viewBox="0 0 9 9"><path d="M4.500 0v9M0 4.500h9" stroke="#909090" /></svg>
              </Round>
            </Tab>
          </Tabs>
          <Devices>
            <Device $strip="#00e010" $w={193}>
              <DeviceMenu aria-haspopup="menu">
                <span>X-Rite i1Pro 2<br />LCD Direct View</span>
                <Round $size={24} $bg={DISC}><Arrow dir="down" /></Round>
              </DeviceMenu>
              <Meter><MeterValue>236</MeterValue></Meter>
            </Device>
            <Device $strip="#e6e600" $w={194}>
              <DeviceMenu aria-haspopup="menu">Generic Calibration DVD<Round $size={24} $bg={DISC}><Arrow dir="down" /></Round></DeviceMenu>
            </Device>
            <Device $strip="#e6e600" $w={179}>
              <DeviceMenu aria-haspopup="menu">Direct Display Control<Round $size={24} $bg={DISC}><Arrow dir="down" /></Round></DeviceMenu>
            </Device>
            <ToolButtons>
              <ToolButton aria-label="Settings">
                <Round $size={24} $bg={DISC}>
                  <svg width="18" height="18" viewBox="0 0 18 18"><circle cx="9" cy="9" r="5" fill="none" stroke="#d4d4d4" strokeWidth="2" /><circle cx="9" cy="9" r="7" fill="none" stroke="#d4d4d4" strokeWidth="2.500" strokeDasharray="2.500 3" /></svg>
                </Round>
              </ToolButton>
              <ToolButton aria-label="Help">
                <Round $size={24} $bg={DISC}>
                  <svg width="14" height="18" viewBox="0 0 14 18"><path d="M3 6q0-4 4-4t4 3.500q0 2-2 3.300T7 12M7 14v3" fill="none" stroke="#eee" strokeWidth="3" /></svg>
                </Round>
              </ToolButton>
              <ToolButton aria-label="Collapse"><Round $size={24} $bg={DISC}><Arrow dir="left" /></Round></ToolButton>
            </ToolButtons>
          </Devices>
        </TopRow>

        <Workspace>
          <Column>
            <PageTitle>Saturation Sweeps</PageTitle>
            <RgbBalance />
            <Reading>
              <ReadingTitle>Current Reading</ReadingTitle>
              <ReadingList>
                {READING.map(([k, v]) => <ReadingRow key={k}><dt>{k}</dt><dd>{v}</dd></ReadingRow>)}
              </ReadingList>
            </Reading>
          </Column>
          <Column>
            <DeltaRow>
              <DeltaChart name="DeltaL" value={0.1} />
              <DeltaChart name="DeltaC" value={3.3} />
              <DeltaChart name="DeltaH" value={1} />
            </DeltaRow>
            <SwatchPanel>
              <SwatchSides>
                <SwatchSide>Actual</SwatchSide>
                <SwatchSide>Target</SwatchSide>
              </SwatchSides>
              <SwatchGrid>
                {ACTUAL.map((c) => <Swatch key={c} $c={c} />)}
                {TARGET.map((c) => <Swatch key={c} $c={c} />)}
                {LEVELS.map((l) => <SwatchLabel key={l}>{l}</SwatchLabel>)}
              </SwatchGrid>
            </SwatchPanel>
            <DeltaE />
          </Column>
          <Column>
            <CieDiagram />
            <Preview />
          </Column>
        </Workspace>

        <BottomBar>
          <PatchGroup>
            <CurrentPatch>
              <Round as="button" $size={19} $bg={DISC_LIGHT} aria-label="Expand patches"><Arrow dir="up" fill="#2c2c2c" size={11} /></Round>
              <CurrentColour />
            </CurrentPatch>
            {LEVELS.map((l, i) => (
              <Patch key={l} $on={i === 4}>
                <PatchColour $c={ACTUAL[i]} />
                <PatchLabel>{l}</PatchLabel>
              </Patch>
            ))}
          </PatchGroup>
          <Transport>
            <StopPanel>
              <StopHead aria-label="Expand controls"><Round $size={19} $bg={DISC_LIGHT}><Arrow dir="up" fill="#2c2c2c" size={11} /></Round></StopHead>
              <StopBody aria-label="Pattern window"><StopFrame /></StopBody>
            </StopPanel>
            <TransportGrid>
              {TRANSPORT.map(([name, icon, off]) => (
                <TransportButton key={name} $off={off} aria-label={name}>
                  <Round $size={25} $bg={off ? 'linear-gradient(#2c2c2c, #3c3c3c)' : DISC_LIGHT}>
                    <svg width="16" height="16" viewBox="0 0 16 16">{icon}</svg>
                  </Round>
                </TransportButton>
              ))}
              <NavButton>
                <Round $size={25} $bg={DISC_LIGHT}><svg width="14" height="14" viewBox="0 0 14 14"><path d="M7 1L2 7l5 6M13 1L8 7l5 6" fill="none" stroke="#333" strokeWidth="2" /></svg></Round>
                Back
              </NavButton>
              <NavButton>
                Next
                <Round $size={25} $bg={DISC_LIGHT}><svg width="14" height="14" viewBox="0 0 14 14"><path d="M1 1l5 6-5 6M7 1l5 6-5 6" fill="none" stroke="#333" strokeWidth="2" /></svg></Round>
              </NavButton>
            </TransportGrid>
          </Transport>
        </BottomBar>
      </Main>
    </Body>

    <TaskBar>
      <TaskGroup>
        <TaskButton $w={60} aria-label="Start"><StartIcon /></TaskButton>
        <TaskButton $w={73} aria-label="File Explorer"><ExplorerIcon /></TaskButton>
        <TaskButton $w={73} aria-label="Internet Explorer"><IeIcon /></TaskButton>
        <TaskButton $w={73} aria-label="Display tool"><HiIcon /></TaskButton>
        <TaskButton $w={75} aria-label="Paint"><PaintIcon /></TaskButton>
        <TaskButton $w={69} $state="open" aria-label="Notepad"><NotepadIcon /></TaskButton>
        <TaskButton $w={65} $state="active" aria-label="CalMAN 5"><CalmanIcon /></TaskButton>
      </TaskGroup>
      <TaskGroup>
        <Tray>
          {TRAY.map(([name, icon]) => (
            <svg key={name} width="20" height="20" viewBox="0 0 20 20" role="img" aria-label={name}>{icon}</svg>
          ))}
        </Tray>
        <Clock><span>22:40</span><span>11.05.2015</span></Clock>
      </TaskGroup>
    </TaskBar>
  </Window>
);

export default App;
